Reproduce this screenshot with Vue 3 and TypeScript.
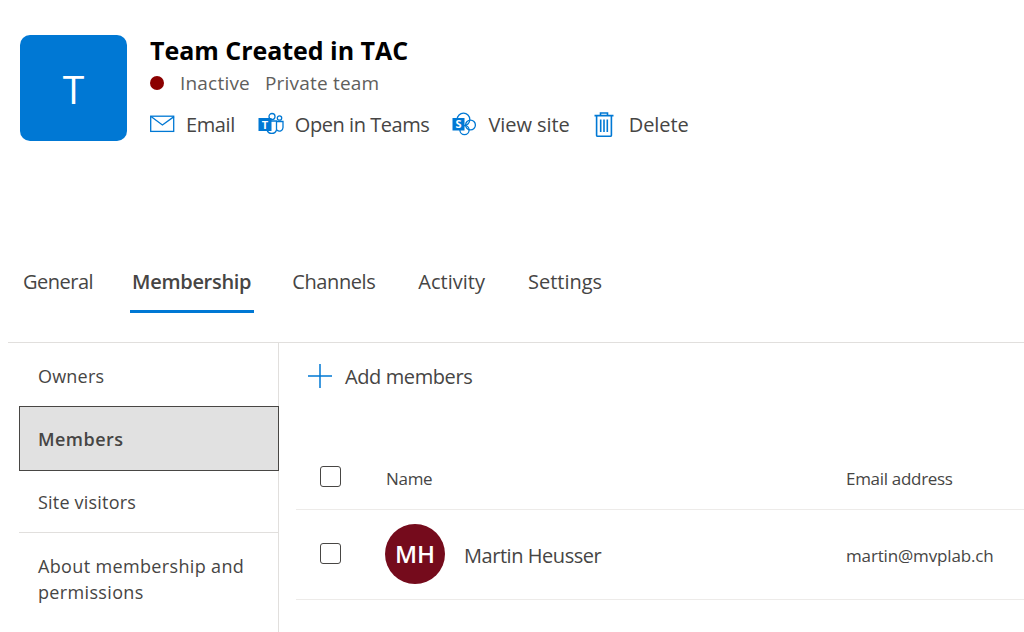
<template>
  <div class="page">
    <header class="head">
      <div class="logo">T</div>
      <div class="info">
        <h1 class="title">Team Created in TAC</h1>
        <div class="status">
          <span class="dot"></span>
          <span class="inactive">Inactive</span>
          <span>Private team</span>
        </div>
        <div class="actions">
          <a class="action email">
            <svg width="25" height="18" viewBox="0 0 25 18" fill="none" stroke="#0078d4" stroke-width="1.3">
              <rect x="0.7" y="1.2" width="23" height="15.2" />
              <path d="M1 1.6 12.4 10 24 1.6" />
            </svg>
            <span>Email</span>
          </a>
          <a class="action teams">
            <svg width="26" height="24" viewBox="0 0 26 24" fill="none">
              <circle cx="14" cy="4.5" r="3" stroke="#0078d4" stroke-width="1.3" />
              <circle cx="21.5" cy="6" r="2.2" stroke="#0078d4" stroke-width="1.3" />
              <path d="M9 9H18.5V18A5 5 0 0 1 9 18Z" stroke="#0078d4" stroke-width="1.3" />
              <path d="M19 9.5H25V15.5A3.5 3.5 0 0 1 19 18" stroke="#0078d4" stroke-width="1.3" />
              <rect x="0.5" y="6" width="13" height="13" fill="#0078d4" />
              <text x="7" y="16.5" class="glyph" font-size="11">T</text>
            </svg>
            <span>Open in Teams</span>
          </a>
          <a class="action site">
            <svg width="25" height="24" viewBox="0 0 25 24" fill="none" stroke="#0078d4" stroke-width="1.3">
              <circle cx="11.5" cy="7.5" r="6.3" />
              <circle cx="18.5" cy="13" r="4.9" />
              <circle cx="12.5" cy="18" r="4.6" />
              <rect x="0.5" y="6" width="12" height="12.5" fill="#0078d4" stroke="none" />
              <text x="6.5" y="16.2" class="glyph" font-size="11" stroke="none">S</text>
            </svg>
            <span>View site</span>
          </a>
          <a class="action del">
            <svg width="20" height="25" viewBox="0 0 20 25" fill="none" stroke="#0078d4" stroke-width="1.6">
              <path d="M0.5 3.6H19.5M6.5 3.4V1H13.5V3.4M2.6 3.8V23.3A1 1 0 0 0 3.6 24.2H16.4A1 1 0 0 0 17.4 23.3V3.8" />
              <path d="M6.7 7.5V20M10 7.5V20M13.3 7.5V20" />
            </svg>
            <span>Delete</span>
          </a>
        </div>
      </div>
    </header>

    <nav class="tabs">
      <a v-for="t in tabs" :key="t" class="tab" :class="{ active: t === 'Membership' }">{{ t }}</a>
    </nav>

    <section class="body">
      <aside class="side">
        <a v-for="s in sideItems" :key="s.label" class="side-item" :class="s.cls">{{ s.label }}</a>
      </aside>
      <main class="main">
        <div class="toolbar">
          <svg width="24" height="24" viewBox="0 0 24 24" stroke="#0078d4" stroke-width="1.5">
            <path d="M12 0V24M0 12H24" />
          </svg>
          <span>Add members</span>
        </div>
        <div class="grid-row header-row">
          <span class="check"></span>
          <span class="name-col">Name</span>
          <span class="email-col">Email address</span>
        </div>
        <div class="grid-row member-row">
          <span class="check"></span>
          <span class="name-col person">
            <span class="avatar">MH</span>
            <span class="person-name">Martin Heusser</span>
          </span>
          <span class="email-col">martin@mvplab.ch</span>
        </div>
      </main>
    </section>
  </div>
</template>

<script setup lang="ts">
const tabs: string[] = ["General", "Membership", "Channels", "Activity", "Settings"];

const sideItems: { label: string; cls: string }[] = [
  { label: "Owners", cls: "owners" },
  { label: "Members", cls: "selected" },
  { label: "Site visitors", cls: "visitors" },
  { label: "About membership and permissions", cls: "about" },
];
</script>

<style>
html,
body {
  margin: 0;
  background: #fff;
  overflow: hidden;
}
</style>

<style scoped>
.page {
  width: 1024px;
  height: 632px;
  overflow: hidden;
  font-family: "Open Sans", "Noto Sans", sans-serif;
  color: #464544;
  box-sizing: border-box;
}

/* header */
.head {
  display: flex;
  gap: 23px;
  height: 106px;
  padding: 35px 0 0 20px;
}

.logo {
  width: 107px;
  height: 106px;
  border-radius: 10px;
  background: #0078d4;
  color: #fff;
  font-size: 39px;
  font-weight: 500;
  display: grid;
  place-items: center;
}

.title {
  margin: -1px 0 1px;
  font-size: 25px;
  line-height: 32px;
  font-weight: 700;
  color: #000;
  letter-spacing: -0.03px;
}

.status {
  display: flex;
  align-items: center;
  height: 32px;
  font-size: 19px;
  letter-spacing: 0.2px;
  color: #605e5c;
}

.dot {
  width: 14px;
  height: 14px;
  border-radius: 50%;
  background: #8b0000;
  margin-right: 16px;
}

.inactive {
  margin-right: 15px;
}

.actions {
  display: flex;
  margin-top: 12px;
  font-size: 20px;
  letter-spacing: -0.4px;
}

.action {
  display: flex;
  align-items: center;
  height: 26px;
}

.email {
  gap: 11px;
  margin-right: 23px;
}
.teams {
  gap: 11px;
  margin-right: 23px;
  letter-spacing: -0.45px;
}
.site {
  gap: 11px;
  margin-right: 24px;
  letter-spacing: -0.05px;
}
.del {
  gap: 15px;
  letter-spacing: -0.1px;
}

.glyph {
  fill: #fff;
  font-family: "Open Sans", sans-serif;
  font-weight: 700;
  text-anchor: middle;
  letter-spacing: 0;
}

/* tabs */
.tabs {
  display: flex;
  margin-top: 112px;
  padding-left: 20px;
  height: 89px;
  font-size: 20px;
}

.tab {
  padding: 15px 3px 11px;
  height: 31px;
  margin-right: 36px;
  border-bottom: 3px solid transparent;
  letter-spacing: 0;
}

.tab:nth-child(1) {
  margin-right: 34px;
  letter-spacing: -0.5px;
}

.tab:nth-child(2) {
  margin-right: 35px;
}

.tab:nth-child(3) {
  margin-right: 37px;
  letter-spacing: -0.4px;
}

.tab:nth-child(4) {
  margin-right: 37px;
}

.tab.active {
  padding-left: 2px;
  padding-right: 3px;
  font-weight: 600;
  letter-spacing: -0.3px;
  border-bottom-color: #0078d4;
}

/* content */
.body {
  display: flex;
  height: 289px;
  margin-left: 8px;
  border-top: 1px solid #e1dfdd;
}

.side {
  width: 259px;
  margin-left: 11px;
  flex: none;
  font-size: 18px;
  letter-spacing: 0.2px;
}

.side-item {
  display: flex;
  align-items: center;
  box-sizing: border-box;
  padding: 0 19px;
  height: 63px;
  line-height: 26px;
}

.side-item.owners {
  padding-top: 2px;
}

.side-item.selected {
  position: relative;
  height: 65px;
  margin-right: -1px;
  padding-left: 18px;
  background: #e1e1e1;
  border: 1px solid #484644;
  font-weight: 600;
  letter-spacing: 0.45px;
}

.side-item.visitors {
  height: 62px;
  border-bottom: 1px solid #e1dfdd;
}

.side-item.about {
  height: 99px;
  align-items: flex-start;
  padding: 20px 24px 0 19px;
  letter-spacing: 0.35px;
}

.main {
  flex: 1;
  min-width: 0;
  border-left: 1px solid #e1dfdd;
  padding-left: 17px;
}

.toolbar {
  display: flex;
  align-items: center;
  gap: 13px;
  height: 66px;
  padding-left: 12px;
  font-size: 20px;
  letter-spacing: -0.4px;
}

.grid-row {
  display: grid;
  grid-template-columns: 65px 460px 1fr;
  align-items: center;
  padding-left: 24px;
  border-bottom: 1px solid #edebe9;
  font-size: 17px;
  letter-spacing: -0.3px;
}

.header-row {
  margin-top: 34px;
  height: 66px;
}

.header-row .name-col,
.header-row .email-col {
  padding: 4px 0 0 1px;
}

.member-row {
  height: 87px;
  padding-bottom: 2px;
}

.member-row .email-col {
  padding: 4px 0 0 1px;
  letter-spacing: -0.15px;
}

.check {
  width: 21px;
  height: 21px;
  box-sizing: border-box;
  border: 1px solid #484644;
  border-radius: 3px;
}

.person {
  display: flex;
  align-items: center;
  gap: 19px;
}

.avatar {
  width: 60px;
  height: 60px;
  border-radius: 50%;
  background: #750b1c;
  color: #fff;
  font-size: 24px;
  font-weight: 600;
  letter-spacing: 0;
  display: grid;
  place-items: center;
  flex: none;
}

.person-name {
  padding-top: 3px;
  font-size: 20px;
  letter-spacing: -0.45px;
}
</style>
